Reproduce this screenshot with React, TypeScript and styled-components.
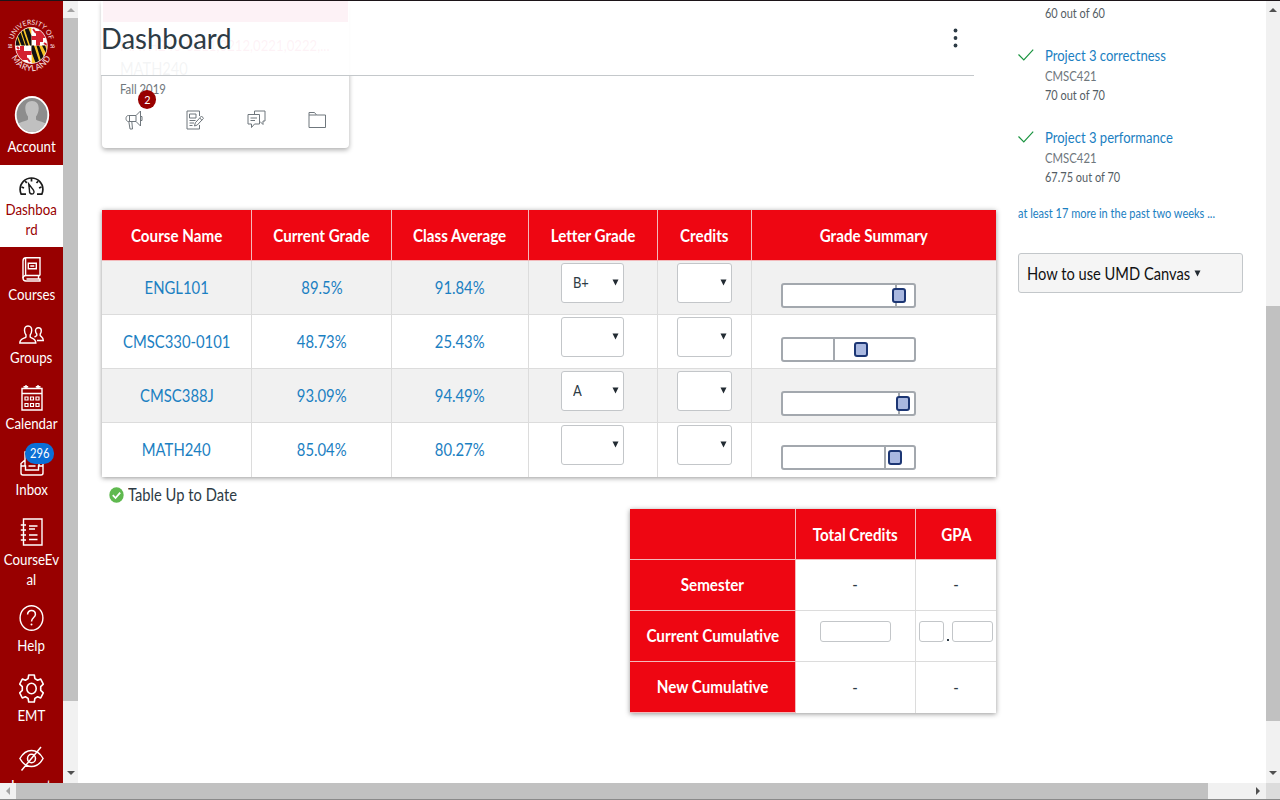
import React from "react";
import styled, { createGlobalStyle, css } from "styled-components";

const GlobalStyle = createGlobalStyle`
  * { box-sizing: border-box; }
  body { margin: 0; background: #fff; font-family: Lato, "Liberation Sans", sans-serif; font-variant-ligatures: none; color: #2d3b45; overflow: hidden; }
`;

const Text = styled.span<{ $size: number; $line?: number; $color?: string; $bold?: boolean; $left?: boolean; $sx?: number }>`
  display: inline-block;
  flex: none;
  white-space: pre;
  font-size: ${(p) => p.$size}px;
  line-height: ${(p) => p.$line ?? 20}px;
  font-weight: ${(p) => (p.$bold ? 700 : 400)};
  color: ${(p) => p.$color ?? "inherit"};
  transform: scaleX(${(p) => p.$sx ?? 0.9});
  transform-origin: ${(p) => (p.$left ? "left" : "center")} center;
`;

const Screen = styled.div`
  width: 1280px;
  height: 800px;
  display: flex;
  flex-direction: column;
  border-top: 1px solid #1c1418;
  border-bottom: 1px solid #8a8a8a;
  overflow: hidden;
`;
const Body = styled.div`
  display: flex;
  height: 782px;
  overflow: hidden;
`;

/* Global navigation */
const Nav = styled.nav`
  width: 63px;
  flex: none;
  background: #980000;
  color: #fff;
  display: flex;
  flex-direction: column;
  overflow: hidden;
`;
const LogoLink = styled.div`
  height: 91px;
  flex: none;
`;
const NavItem = styled.div<{ $top: number; $gap: number; $bottom?: number; $active?: boolean }>`
  position: relative;
  flex: none;
  display: flex;
  flex-direction: column;
  align-items: center;
  padding-top: ${(p) => p.$top}px;
  padding-bottom: ${(p) => p.$bottom ?? 0}px;
  ${(p) => p.$active && css`background: #fff; color: #980000;`}
  svg { display: block; flex: none; margin-bottom: ${(p) => p.$gap}px; }
`;
const Count = styled.span`
  position: absolute;
  left: 25px;
  top: 9px;
  width: 29px;
  height: 21px;
  border-radius: 10px;
  background: #0b6fd6;
  display: flex;
  align-items: center;
  justify-content: center;
`;

/* Scrollbars */
const VScroll = styled.div<{ $w: number }>`
  width: ${(p) => p.$w}px;
  flex: none;
  background: #f1f1f1;
  display: flex;
  flex-direction: column;
  align-items: center;
`;
const VThumb = styled.div<{ $top: number; $h: number }>`
  margin-top: ${(p) => p.$top}px;
  width: 100%;
  height: ${(p) => p.$h}px;
  background: #c1c1c1;
`;
const ArrowCell = styled.div<{ $push?: boolean }>`
  height: 17px;
  flex: none;
  display: flex;
  align-items: center;
  justify-content: center;
  ${(p) => p.$push && css`margin-top: auto; padding-bottom: 3px;`}
`;
const HScroll = styled.div`
  height: 16px;
  flex: none;
  display: flex;
  align-items: center;
  background: #f1f1f1;
`;
const HCell = styled.div<{ $w: number; $bg?: string }>`
  width: ${(p) => p.$w}px;
  height: 16px;
  background: ${(p) => p.$bg ?? "transparent"};
  display: flex;
  align-items: center;
  justify-content: center;
`;

/* Dashboard */
const Main = styled.main`
  position: relative;
  width: 940px;
  flex: none;
  padding-left: 24px;
`;
const Header = styled.header`
  position: absolute;
  left: 23px;
  top: 0;
  width: 873px;
  height: 75px;
  background: rgba(255, 255, 255, 0.945);
  border-bottom: 1px solid #c4c8cb;
  display: flex;
  align-items: flex-start;
  justify-content: space-between;
  padding: 17px 16px 0 0;
`;
const Card = styled.section`
  width: 247px;
  height: 147px;
  border-radius: 0 0 4px 4px;
  background: #fff;
  box-shadow: 0 2px 5px rgba(0, 0, 0, 0.32);
  overflow: hidden;
  display: flex;
  flex-direction: column;
`;
const CardHero = styled.div`
  height: 21px;
  flex: none;
  margin: 0 1px;
  background: #d8195c;
`;
const CardBody = styled.div`
  padding: 12px 0 0 18px;
  display: flex;
  flex-direction: column;
  align-items: flex-start;
`;
const CardActions = styled.div`
  display: flex;
  padding: 12px 0 0 23px;
  gap: 43px;
  color: #6f777d;
`;
const Action = styled.div`
  position: relative;
  width: 18px;
  height: 20px;
  svg { display: block; }
`;
const Unread = styled.span`
  position: absolute;
  left: 13px;
  top: -20px;
  width: 18px;
  height: 19px;
  border-radius: 50%;
  background: #980000;
  display: flex;
  align-items: center;
  justify-content: center;
`;

/* Grade tables */
const Table = styled.div<{ $cols: string }>`
  display: grid;
  grid-template-columns: ${(p) => p.$cols};
  box-shadow: 0 1px 5px rgba(0, 0, 0, 0.42);
  background: #fff;
`;
const GradesWrap = styled.div`
  width: 894px;
  margin-top: 62px;
`;
const GpaWrap = styled.div`
  width: 366px;
  margin: 4px 0 0 528px;
`;
const Th = styled.div<{ $h: number; $last?: boolean; $side?: boolean }>`
  height: ${(p) => p.$h}px;
  padding-top: ${(p) => (p.$side ? 0 : 2)}px;
  background: #ee0612;
  color: #fff;
  display: flex;
  align-items: center;
  justify-content: center;
  border-bottom: 1px solid #f3b9bb;
  border-right: ${(p) => (p.$last ? "0" : "1px solid #f3b9bb")};
`;
const Td = styled.div<{ $h: number; $odd?: boolean; $last?: boolean; $top?: boolean; $end?: boolean }>`
  height: ${(p) => p.$h}px;
  background: ${(p) => (p.$odd ? "#f1f1f1" : "#fff")};
  display: flex;
  align-items: ${(p) => (p.$top ? "flex-start" : "center")};
  justify-content: center;
  border-bottom: ${(p) => (p.$end ? "0" : "1px solid #dcdcdc")};
  border-right: ${(p) => (p.$last ? "0" : "1px solid #dcdcdc")};
`;
const Select = styled.div<{ $w: number }>`
  width: ${(p) => p.$w}px;
  height: 40px;
  margin: 2px 1px 0 0;
  border: 1px solid #c3c6c9;
  border-radius: 3px;
  background: #fff;
  display: flex;
  align-items: center;
  justify-content: space-between;
  padding: 0 4px 1px 11px;
`;
const Range = styled.div`
  position: relative;
  width: 135px;
  height: 25px;
  margin: 22px 52px 0 0;
  border: 2px solid #a3a8ae;
  border-radius: 3px;
  background: #fff;
`;
const Mean = styled.i<{ $x: number }>`
  position: absolute;
  left: ${(p) => p.$x}px;
  top: 0;
  width: 2px;
  height: 21px;
  background: #a3a8ae;
`;
const Knob = styled.i<{ $x: number }>`
  position: absolute;
  left: ${(p) => p.$x}px;
  top: 3px;
  width: 14px;
  height: 15px;
  border: 2px solid #1c3674;
  border-radius: 3px;
  background: #a9b8e0;
`;
const Status = styled.div`
  display: flex;
  align-items: center;
  height: 28px;
  padding: 8px 0 0 7px;
  gap: 4px;
`;
const Field = styled.div<{ $w: number }>`
  width: ${(p) => p.$w}px;
  height: 21px;
  flex: none;
  margin-top: 9.5px;
  border: 1px solid #c3c6c9;
  border-radius: 3px;
  background: #fff;
`;
const Dot = styled.i`
  width: 2px;
  height: 2px;
  margin: 28px 3px 0;
  background: #2d3b45;
`;

/* Right side */
const Aside = styled.aside`
  width: 248px;
  flex: none;
  display: flex;
  flex-direction: column;
  align-items: flex-start;
`;
const Feedback = styled.div<{ $top: number }>`
  display: flex;
  margin-top: ${(p) => p.$top}px;
  svg { display: block; margin: 4px 11px 0 0; }
`;
const Lines = styled.div`
  display: flex;
  flex-direction: column;
  align-items: flex-start;
`;
const FirstScore = styled.div`
  padding: 1px 0 0 27px;
`;
const More = styled.div`
  margin-top: 15px;
`;
const HelpMenu = styled.div`
  width: 225px;
  height: 40px;
  margin-top: 29px;
  border: 1px solid #c3c7ca;
  border-radius: 3px;
  background: #f5f5f5;
  color: #111;
  display: flex;
  align-items: center;
  padding: 1px 0 0 8px;
`;
const MenuLabel = styled.div`
  width: 167px;
`;

const Arrow = ({ dir, color = "#505050" }: { dir: "up" | "down" | "left" | "right"; color?: string }) => {
  const d = { up: "M0 6L4 2L8 6Z", down: "M0 2L4 6L8 2Z", left: "M6 0L2 4L6 8Z", right: "M2 0L6 4L2 8Z" }[dir];
  return <svg width="8" height="8" viewBox="0 0 8 8"><path d={d} fill={color} /></svg>;
};
const Caret = () => (
  <svg width="7" height="7" viewBox="0 0 7 7"><path d="M0.5 0.5H6.5L3.5 6.5Z" fill="#222b32" /></svg>
);

const Ico = ({ w, h, sw = 1.4, children }: { w: number; h: number; sw?: number; children: React.ReactNode }) => (
  <svg width={w} height={h} viewBox={`0 0 ${w} ${h}`} fill="none" stroke="currentColor" strokeWidth={sw}>{children}</svg>
);

const Seal = () => (
  <svg width="63" height="91" viewBox="0 1 63 91">
    <defs>
      <clipPath id="disc"><ellipse cx="31.3" cy="45.5" rx="15.6" ry="17.6" /></clipPath>
      <path id="arcTop" d="M12.800 45.500A18.500 20.900 0 0 1 49.800 45.500" />
      <path id="arcBottom" d="M8.900 45.500A22.400 25.600 0 0 0 53.700 45.500" />
    </defs>
    <ellipse cx="31.3" cy="45.5" rx="16.4" ry="18.400" fill="#f3dede" />
    <g clipPath="url(#disc)">
      <path d="M15 27H31.5V45.5H15Z M31.5 45.5H48V64H31.5Z" fill="#f7c325" />
      <path d="M31.5 27H48V45.5H31.5Z M15 45.5H31.5V64H15Z" fill="#fff" />
      <path d="M15 31L20 45.500H15Z M19 28L25 45.500H21.500L16 31Z M24 27H28L31.500 36V45.500H30Z M20 27L26 45.500H28.500L22 27Z" fill="#111" />
      <path d="M31.500 45.500H34L40 64H36L31.500 52Z M36.500 45.500H39L45 60L42 64Z M42 45.500H45L48 54V57Z" fill="#111" />
      <path d="M31.500 36H36V31H39.500V27H43V33H48V38H43V42H40V45.500H36V40H31.500Z" fill="#d4202f" />
      <path d="M15 50H20V46H24V51H31.500V55H27V60H23V64H19V56H15Z" fill="#d4202f" />
      <path d="M33 29L36 33M44 43L47 45M17 47L19 49M27 58L30 62" stroke="#d4202f" strokeWidth="2" />
    </g>
    <g fill="#f8e4e4" fontFamily="Lato, sans-serif">
      <text fontSize="6.9" textAnchor="middle"><textPath href="#arcTop" startOffset="50%">UNIVERSITY OF</textPath></text>
      <text fontSize="8.4" letterSpacing="0.5" textAnchor="middle"><textPath href="#arcBottom" startOffset="50%">MARYLAND</textPath></text>
      <text x="7.500" y="47.500" fontSize="5" textLength="5">18</text>
      <text x="50" y="47.500" fontSize="5" textLength="5">56</text>
    </g>
  </svg>
);

const Avatar = () => (
  <svg width="36" height="38" viewBox="0 0 36 38">
    <defs><clipPath id="face"><ellipse cx="18" cy="19" rx="15.400" ry="17" /></clipPath></defs>
    <ellipse cx="18" cy="19" rx="17.200" ry="18.900" fill="#fff" />
    <g clipPath="url(#face)">
      <path d="M0 0H36V38H0Z" fill="#8d8d8d" />
      <path d="M18 5C13.500 5 11.200 8 11.300 12.500C11.400 16 12.600 18.500 14 20.500V23.500C12 25.500 5 25.500 2 30V38H34V30C31 25.500 24 25.500 22 23.500V20.500C23.500 18.500 24.600 16 24.700 12.500C24.800 8 22.500 5 18 5Z" fill="#c0c0c0" />
    </g>
  </svg>
);

const DashIcon = () => (
  <Ico w={25} h={18} sw={1.7}>
    <g stroke="#1b1b1b">
      <path d="M7 17.100H2.200C1.500 15.500 1.100 14 1.100 12.500C1.100 6 6.100 1 12.500 1S23.900 6 23.900 12.500C23.900 14 23.500 15.500 22.800 17.100H18" />
      <path d="M12.500 1V4.500M6.200 4L7.700 6M19.100 4.200L17.500 6M2.500 10L5 11M22.500 10L20 11" />
      <path d="M9.700 7L14.300 12.800C15.700 14.800 15 17 13 17C11 17 10.300 15.500 10.500 13.500Z" strokeWidth="1.400" />
    </g>
  </Ico>
);
const CoursesIcon = () => (
  <Ico w={19} h={25}>
    <path d="M18 18.500V0.800H4C2 0.800 1 2 1 4V21C1 23 2 24 4 24H18V22H4.500" />
    <path d="M18 18.500H4C2.200 18.500 1 19.500 1 21.300M3.600 1V18M6.300 6.300H14.300V11.800H6.300ZM8.300 9H12.300M16.500 18.500V22" />
  </Ico>
);
const GroupsIcon = () => (
  <Ico w={25} h={19} sw={1.4}>
    <path d="M9 1C6.300 1 5.400 3 5.500 5.500C5.600 7.800 6.300 9 7 10V12C5.800 13.500 0.800 13.500 0.800 18H16.800C16.800 13.500 12.500 13.500 11.200 12V10C12 9 12.600 7.800 12.700 5.500C12.800 3 12 1 9 1Z" />
    <path d="M15.500 12C16.500 11.500 17.300 11 17.800 10.300V9C16.800 8 16.500 7 16.500 5.800C16.500 4 17.500 2.800 19.400 2.800S22.300 4 22.300 5.800C22.300 7 22 8 21.200 9V10.500C22.200 12 24.300 12 24.300 15.500H18" />
  </Ico>
);
const CalendarIcon = () => (
  <Ico w={22} h={27}>
    <path d="M1 4.500H21V26H1ZM1 9.500H21M5 1V5M17 1V5M2.500 2.800H7.200M14.800 2.800H19.500" />
    <path d="M4 13H7V16H4ZM9.500 13H12.500V16H9.500ZM15 13H18V16H15ZM4 19.500H7V22.500H4ZM9.500 19.500H12.500V22.500H9.500ZM15 19.500H18V22.500H15Z" strokeWidth="1.200" />
  </Ico>
);
const InboxIcon = () => (
  <Ico w={24} h={25}>
    <path d="M5 14.500V1H19V14.500M5 9L1 12.500V22C1 23.300 1.700 24 3 24H21C22.300 24 23 23.300 23 22V12.500L19 9M1 15H5.500V19H18.500V15H23M8.500 15H15.500" />
  </Ico>
);
const EvalIcon = () => (
  <Ico w={23} h={28}>
    <path d="M3.500 1H22V27H3.500ZM0.800 7H6M0.800 12H6M0.800 17H6M0.800 22H6M9 8H17.500M9 11H15M9 17H17.500M9 21.500H17.500" />
  </Ico>
);
const HelpIcon = () => (
  <Ico w={25} h={26}>
    <ellipse cx="12.500" cy="13" rx="11.400" ry="12.300" />
    <path d="M8.600 9.500C8.600 7 10.200 5.600 12.500 5.600S16.400 7 16.400 9.400C16.400 12.500 12.500 12.500 12.500 16.500" strokeWidth="1.500" />
    <circle cx="12.500" cy="19.500" r="1" fill="currentColor" stroke="none" />
  </Ico>
);
const GearIcon = () => (
  <Ico w={25} h={29} sw={1.6}>
    <path d="M9.700 1H15.300L15.900 4.600L18.600 6.300L21.700 5L24.300 10.200L21.700 12.700V16.300L24.300 18.800L21.700 24L18.600 22.700L15.900 24.400L15.300 28H9.700L9.100 24.400L6.400 22.700L3.300 24L0.700 18.800L3.300 16.300V12.700L0.700 10.200L3.300 5L6.400 6.300L9.100 4.600Z" strokeLinejoin="round" />
    <ellipse cx="12.500" cy="14.500" rx="4.700" ry="5.300" />
  </Ico>
);
const EyeOffIcon = () => (
  <Ico w={25} h={25} sw={1.5}>
    <path d="M0.900 12.500C4 7 8 4.500 12.500 4.500S21 7 24.100 12.500C21 18 17 20.500 12.500 20.500S4 18 0.900 12.500ZM22 1L2.500 24.500" />
    <ellipse cx="12.500" cy="12.500" rx="4" ry="4.300" />
  </Ico>
);

const MegaphoneIcon = () => (
  <Ico w={18} h={20} sw={1}>
    <path d="M11 5.500L15.500 1V16L11 11.500M11 5.500H3.500C1.900 5.500 1 6.800 1 8.500S1.900 11.500 3.500 11.500H11V5.500M3.800 11.500L5 19H7.500L6.800 11.500M15.500 6.500H17V10.500H15.500M4.500 5.500V11.500" />
  </Ico>
);
const AssignmentIcon = () => (
  <Ico w={18} h={20} sw={1}>
    <path d="M13.500 6V1H1V19H13.500V15M3.500 4H10V8H3.500ZM3.500 10.500H9.500M3.500 13H8M3.500 15.500H6.500M8.500 16L9.300 12.800L15.500 6L17.500 8.300L11.300 15ZM13.800 8L15.800 10.200" />
  </Ico>
);
const DiscussIcon = () => (
  <Ico w={19} h={20} sw={1}>
    <path d="M7.500 4.500V1H18V11H16V14.500L13 11.500M1 4.500H12.500V14H7.500L4.500 17.500V14H1ZM3.500 8H10M3.500 10.500H8" />
  </Ico>
);
const FolderIcon = () => (
  <Ico w={18} h={20} sw={1}>
    <path d="M1 17.500V2.500H6.500L8.500 5H17.500V17.500H1ZM1 5H8.500" />
  </Ico>
);
const Check = () => (
  <svg width="16" height="12" viewBox="0 0 16 12" fill="none" stroke="#1a9440" strokeWidth="1.200"><path d="M0.500 5.500L5.800 10.800L15.200 0.600" /></svg>
);

const LINK = "#1b80c2";
const GREY = "#6f777d";
const SCORE = "#545d64";

const navItems = [
  { icon: <Avatar />, lines: ["Account"], top: 4, gap: 3, bottom: 8 },
  { icon: <DashIcon />, lines: ["Dashboa", "rd"], top: 12, gap: 5, bottom: 7, active: true },
  { icon: <CoursesIcon />, lines: ["Courses"], top: 10, gap: 3 },
  { icon: <GroupsIcon />, lines: ["Groups"], top: 20, gap: 4 },
  { icon: <CalendarIcon />, lines: ["Calendar"], top: 16, gap: 3 },
  { icon: <InboxIcon />, lines: ["Inbox"], top: 17, gap: 4, count: "296" },
  { icon: <EvalIcon />, lines: ["CourseEv", "al"], top: 18, gap: 4 },
  { icon: <HelpIcon />, lines: ["Help"], top: 15, gap: 5 },
  { icon: <GearIcon />, lines: ["EMT"], top: 18, gap: 3 },
  { icon: <EyeOffIcon />, lines: ["Logout"], top: 20, gap: 5 },
];

const courses = [
  { name: "ENGL101", grade: "89.5%", avg: "91.84%", letter: "B+", mean: 112, knob: 109 },
  { name: "CMSC330-0101", grade: "48.73%", avg: "25.43%", letter: "", mean: 50, knob: 71 },
  { name: "CMSC388J", grade: "93.09%", avg: "94.49%", letter: "A", mean: 115, knob: 113 },
  { name: "MATH240", grade: "85.04%", avg: "80.27%", letter: "", mean: 101, knob: 105 },
];

const FeedbackItem = ({ title, score, top }: { title: string; score: string; top: number }) => (
  <Feedback $top={top}>
    <Check />
    <Lines>
      <Text $size={14.6} $line={22} $left $sx={0.895} $color={LINK}>{title}</Text>
      <Text $size={12.6} $line={20} $left $color={GREY}>CMSC421</Text>
      <Text $size={12.4} $line={18} $left $sx={0.885} $color={SCORE}>{score}</Text>
    </Lines>
  </Feedback>
);

export default function App() {
  return (
    <Screen>
      <GlobalStyle />
      <Body>
        <Nav>
          <LogoLink><Seal /></LogoLink>
          {navItems.map((n) => (
            <NavItem key={n.lines[0]} $top={n.top} $gap={n.gap} $bottom={n.bottom} $active={n.active}>
              {n.icon}
              {n.lines.map((l) => <Text key={l} $size={14.6} $sx={0.91}>{l}</Text>)}
              {n.count && <Count><Text $size={12.4}>{n.count}</Text></Count>}
            </NavItem>
          ))}
        </Nav>
        <VScroll $w={15}>
          <ArrowCell><Arrow dir="up" color="#a3a3a3" /></ArrowCell>
          <VThumb $top={0} $h={683} />
          <ArrowCell $push><Arrow dir="down" /></ArrowCell>
        </VScroll>
        <Main>
          <Card>
            <CardHero />
            <CardBody>
              <Text $size={15.2} $line={22} $left $sx={0.868} $color="#d8195c">MATH240-0211,0212,0221,0222,...</Text>
              <Text $size={16.3} $line={25} $left>MATH240</Text>
              <Text $size={12.6} $line={17} $left $color={GREY}>Fall 2019</Text>
            </CardBody>
            <CardActions>
              <Action><MegaphoneIcon /><Unread><Text $size={12} $color="#fff">2</Text></Unread></Action>
              <Action><AssignmentIcon /></Action>
              <Action><DiscussIcon /></Action>
              <Action><FolderIcon /></Action>
            </CardActions>
          </Card>
          <Header>
            <Text $size={29.8} $line={40} $left $sx={0.92}>Dashboard</Text>
            <svg width="5" height="40" viewBox="0 0 5 40" fill="#2d3b45">
              <circle cx="2.500" cy="12.500" r="1.900" /><circle cx="2.500" cy="20" r="1.900" /><circle cx="2.500" cy="27.500" r="1.900" />
            </svg>
          </Header>
          <GradesWrap>
            <Table $cols="150px 140px 137px 129px 94px 244px">
              {["Course Name", "Current Grade", "Class Average", "Letter Grade", "Credits", "Grade Summary"].map((h, i) => (
                <Th key={h} $h={51} $last={i === 5}><Text $size={16.5} $bold $sx={0.92}>{h}</Text></Th>
              ))}
              {courses.map((c, i) => {
                const row = { $h: 54, $odd: i % 2 === 0, $end: i === 3 };
                return (
                  <React.Fragment key={c.name}>
                    <Td {...row}><Text $size={16.5} $color={LINK}>{c.name}</Text></Td>
                    <Td {...row}><Text $size={16.5} $color={LINK}>{c.grade}</Text></Td>
                    <Td {...row}><Text $size={16.5} $color={LINK}>{c.avg}</Text></Td>
                    <Td {...row} $top><Select $w={63}><Text $size={14.4} $left>{c.letter}</Text><Caret /></Select></Td>
                    <Td {...row} $top><Select $w={55}><Text $size={14.4} /><Caret /></Select></Td>
                    <Td {...row} $top $last><Range><Mean $x={c.mean} /><Knob $x={c.knob} /></Range></Td>
                  </React.Fragment>
                );
              })}
            </Table>
          </GradesWrap>
          <Status>
            <svg width="15" height="16" viewBox="0 0 15 16">
              <ellipse cx="7.500" cy="8" rx="7.200" ry="7.800" fill="#5fb94f" />
              <path d="M3.800 8.200L6.500 11L11.200 5.600" fill="none" stroke="#fff" strokeWidth="1.800" />
            </svg>
            <Text $size={16.5} $left $sx={0.893}>Table Up to Date</Text>
          </Status>
          <GpaWrap>
            <Table $cols="166px 120px 80px">
              <Th $h={51} />
              <Th $h={51}><Text $size={16.5} $bold $sx={0.92}>Total Credits</Text></Th>
              <Th $h={51} $last><Text $size={16.5} $bold $sx={0.92}>GPA</Text></Th>
              <Th $h={51} $side><Text $size={16.5} $bold $sx={0.92}>Semester</Text></Th>
              <Td $h={51}><Text $size={16.5}>-</Text></Td>
              <Td $h={51} $last><Text $size={16.5}>-</Text></Td>
              <Th $h={51} $side><Text $size={16.5} $bold $sx={0.925}>Current Cumulative</Text></Th>
              <Td $h={51} $top><Field $w={71} /></Td>
              <Td $h={51} $last $top><Field $w={25} /><Dot /><Field $w={41} /></Td>
              <Th $h={51} $side><Text $size={16.5} $bold $sx={0.92}>New Cumulative</Text></Th>
              <Td $h={51} $end><Text $size={16.5}>-</Text></Td>
              <Td $h={51} $end $last><Text $size={16.5}>-</Text></Td>
            </Table>
          </GpaWrap>
        </Main>
        <Aside>
          <FirstScore><Text $size={12.4} $line={20} $left $sx={0.885} $color={SCORE}>60 out of 60</Text></FirstScore>
          <FeedbackItem title="Project 3 correctness" score="70 out of 70" top={21} />
          <FeedbackItem title="Project 3 performance" score="67.75 out of 70" top={22} />
          <More><Text $size={12.4} $line={20} $left $sx={0.889} $color={LINK}>at least 17 more in the past two weeks ...</Text></More>
          <HelpMenu>
            <MenuLabel><Text $size={16.5} $left $sx={0.89}>How to use UMD Canvas</Text></MenuLabel>
            <Caret />
          </HelpMenu>
        </Aside>
        <VScroll $w={14}>
          <ArrowCell><Arrow dir="up" /></ArrowCell>
          <VThumb $top={288} $h={415} />
          <ArrowCell $push><Arrow dir="down" /></ArrowCell>
        </VScroll>
      </Body>
      <HScroll>
        <HCell $w={16}><Arrow dir="left" color="#a3a3a3" /></HCell>
        <HCell $w={1192} $bg="#c1c1c1" />
        <HCell $w={42} />
        <HCell $w={16}><Arrow dir="right" /></HCell>
        <HCell $w={14} $bg="#dcdcdc" />
      </HScroll>
    </Screen>
  );
}
